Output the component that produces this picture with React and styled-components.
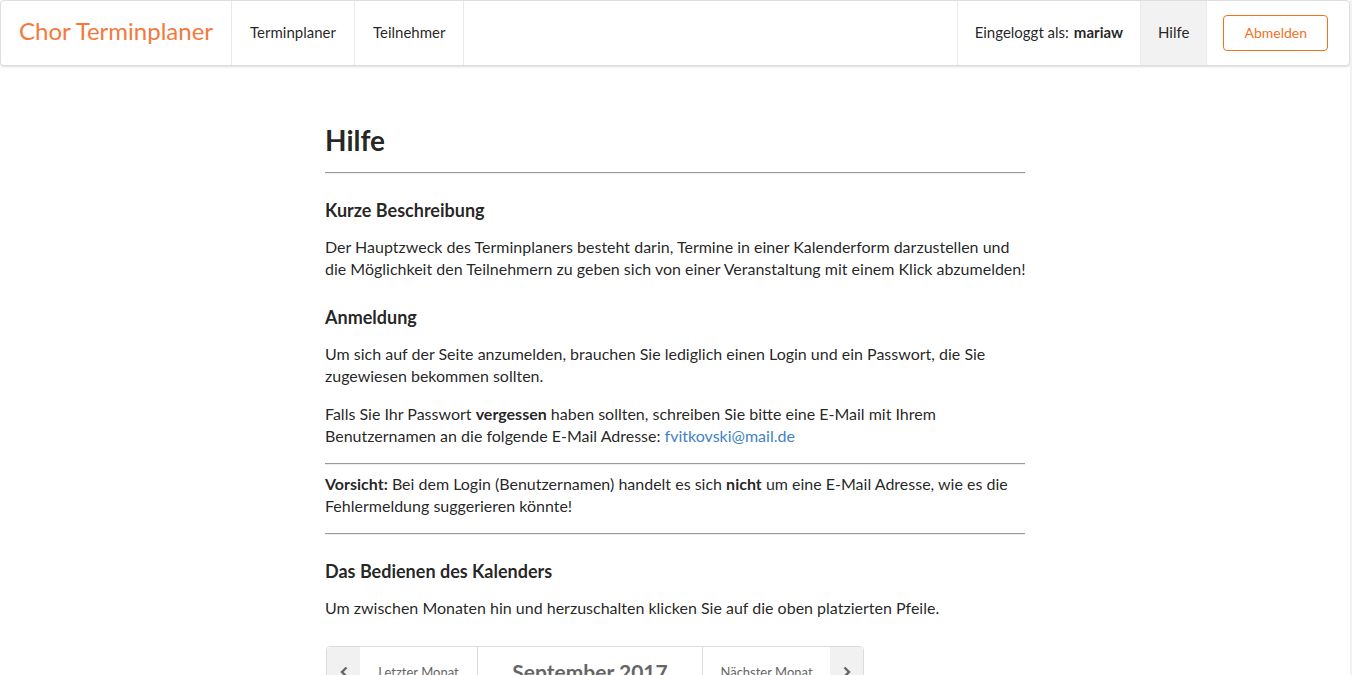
import React from 'react';
import styled, { createGlobalStyle } from 'styled-components';

const GlobalStyle = createGlobalStyle`
  *, *::before, *::after { box-sizing: border-box; }
  body {
    margin: 0;
    background: #fff;
    color: rgba(0, 0, 0, 0.87);
    font-family: Lato, 'Liberation Sans', sans-serif;
    font-size: 16px;
    line-height: 22px;
  }
`;

const Page = styled.div`
  height: 100vh;
  overflow: hidden;
  border-right: 2px solid #f1f1f1;
`;

const Menu = styled.nav`
  display: flex;
  height: 66px;
  font-size: 15px;
  background: #fff;
  border: 1px solid #dededf;
  border-radius: 4px;
  box-shadow: 0 1px 2px rgba(34, 36, 38, 0.15);
`;

const MenuItem = styled.a`
  display: flex;
  align-items: center;
  gap: 5px;
  padding: 0 18px 2px;
  color: inherit;
  text-decoration: none;
  white-space: nowrap;
  background: ${(p) => (p.$active ? '#f2f2f2' : 'transparent')};
  border-right: 1px solid #e8e9e9;
`;

const Brand = styled(MenuItem)`
  padding-bottom: 4px;
  color: #f5793b;
  font-size: 24px;
`;

const RightMenu = styled.div`
  display: flex;
  margin-left: auto;
  border-left: 1px solid #e8e9e9;

  ${MenuItem} {
    padding-left: 17px;
    padding-right: 17px;
  }
`;

const ButtonItem = styled.div`
  display: flex;
  align-items: center;
  padding: 0 21px 0 16px;
`;

const LogoutButton = styled.button`
  height: 36px;
  padding: 0 20px;
  font: inherit;
  font-size: 14px;
  color: #f2711c;
  background: transparent;
  border: 1px solid #f2711c;
  border-radius: 4px;
  cursor: pointer;
`;

const Content = styled.main`
  max-width: 700px;
  margin: 56px auto 0;
`;

const Title = styled.h1`
  margin: 0 0 14px;
  font-size: 28px;
  line-height: 36px;
  font-weight: 700;
`;

const Rule = styled.hr`
  margin: 8px 0;
  border: 0;
  border-top: 1px solid #9a9a9a;
  border-bottom: 1px solid #eee;
`;

const Heading = styled.h2`
  margin: 26px 0 14px;
  font-size: 18px;
  line-height: 23px;
  font-weight: 700;

  ${Rule} + & {
    margin-top: 25px;
  }
`;

const Text = styled.p`
  margin: 0 -12px 16px 0;
`;

const MailLink = styled.a`
  color: #4183c4;
  text-decoration: none;
`;

const MonthSwitcher = styled.div`
  display: grid;
  grid-template-columns: 150px 226px 160px;
  width: fit-content;
  height: 52px;
  margin: 27px 0 0 1px;
  color: #666;
  border: 1px solid #dcdcdc;
  border-radius: 4px;
  overflow: hidden;
`;

const MonthButton = styled.button`
  display: flex;
  align-items: stretch;
  padding: 0;
  font: inherit;
  font-size: 13px;
  color: inherit;
  background: #fff;
  border: 0;
  cursor: pointer;
`;

const Arrow = styled.span`
  display: grid;
  place-items: center;
  width: 33px;
  background: #f1f1f1;
`;

const MonthLabel = styled.span`
  flex: 1;
  align-self: center;
  text-align: center;
`;

const CurrentMonth = styled.div`
  display: grid;
  place-items: center;
  font-size: 21px;
  font-weight: 700;
  border: solid #dcdcdc;
  border-width: 0 1px;
`;

const Chevron = ({ d }) => (
  <svg width="12" height="12" viewBox="0 0 12 12" fill="none" stroke="currentColor" strokeWidth="2.4" aria-hidden="true">
    <path d={d} />
  </svg>
);

export default function App() {
  return (
    <>
      <GlobalStyle />
      <Page>
        <Menu>
          <Brand href="#start">Chor Terminplaner</Brand>
          <MenuItem href="#terminplaner">Terminplaner</MenuItem>
          <MenuItem href="#teilnehmer">Teilnehmer</MenuItem>
          <RightMenu>
            <MenuItem as="div">
              Eingeloggt als: <b>mariaw</b>
            </MenuItem>
            <MenuItem href="#hilfe" $active>Hilfe</MenuItem>
            <ButtonItem>
              <LogoutButton type="button">Abmelden</LogoutButton>
            </ButtonItem>
          </RightMenu>
        </Menu>
        <Content>
          <Title>Hilfe</Title>
          <Rule />
          <Heading>Kurze Beschreibung</Heading>
          <Text>
            Der Hauptzweck des Terminplaners besteht darin, Termine in einer Kalenderform darzustellen und
            <br />
            die Möglichkeit den Teilnehmern zu geben sich von einer Veranstaltung mit einem Klick abzumelden!
          </Text>
          <Heading>Anmeldung</Heading>
          <Text>
            Um sich auf der Seite anzumelden, brauchen Sie lediglich einen Login und ein Passwort, die Sie
            zugewiesen bekommen sollten.
          </Text>
          <Text>
            Falls Sie Ihr Passwort <b>vergessen</b> haben sollten, schreiben Sie bitte eine E-Mail mit Ihrem
            Benutzernamen an die folgende E-Mail Adresse:{' '}
            <MailLink href="mailto:fvitkovski@mail.de">fvitkovski@mail.de</MailLink>
          </Text>
          <Rule />
          <Text>
            <b>Vorsicht:</b> Bei dem Login (Benutzernamen) handelt es sich <b>nicht</b> um eine E-Mail
            Adresse, wie es die Fehlermeldung suggerieren könnte!
          </Text>
          <Rule />
          <Heading>Das Bedienen des Kalenders</Heading>
          <Text>Um zwischen Monaten hin und herzuschalten klicken Sie auf die oben platzierten Pfeile.</Text>
          <MonthSwitcher>
            <MonthButton type="button">
              <Arrow><Chevron d="M8.5 1.5 4 6l4.5 4.5" /></Arrow>
              <MonthLabel>Letzter Monat</MonthLabel>
            </MonthButton>
            <CurrentMonth>September 2017</CurrentMonth>
            <MonthButton type="button">
              <MonthLabel>Nächster Monat</MonthLabel>
              <Arrow><Chevron d="M3.5 1.5 8 6l-4.5 4.5" /></Arrow>
            </MonthButton>
          </MonthSwitcher>
        </Content>
      </Page>
    </>
  );
}
